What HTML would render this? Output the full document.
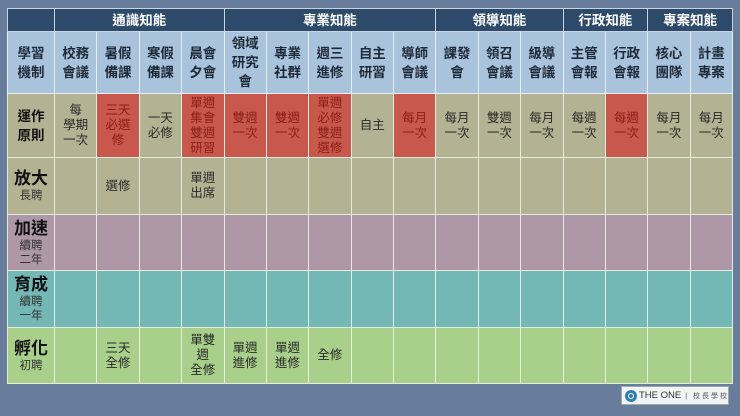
<!DOCTYPE html>
<html><head><meta charset="utf-8"><style>
body{margin:0;width:740px;height:416px;background:#687c9c;overflow:hidden;font-family:"Liberation Sans","Noto Sans CJK TC",sans-serif;position:relative}
table{position:absolute;left:7px;top:8px;width:726px;border-collapse:collapse;table-layout:fixed}
td{border:1px solid #e6ecdf;text-align:center;vertical-align:middle;padding:0;font-size:12.5px;line-height:15px;color:#2a2a2a;overflow:hidden}
.g td{background:#2e4a6a;color:#fff;font-size:13.5px;font-weight:bold;height:22px;border-color:#c8d4e0}
.h td{background:#a9c3dd;font-weight:bold;font-size:13.5px;line-height:19px;color:#1e2a38;height:61px;border-color:#e8eef5}
.o td{background:#b3b293;height:63px}
.o2 td{background:#b3b293;height:56px}
.p td{background:#ae98a8;height:55px}
.t td{background:#74b8b6;height:56px}
.n td{background:#a8d08b;height:55px}
td.r{background:#c8584b!important;color:#8c1e18}
.lb{font-weight:bold;font-size:17px;line-height:20px;color:#111}
.sb{font-size:11.5px;line-height:14px;color:#333;display:block}
.b{font-weight:bold;font-size:13.5px;line-height:19px;color:#111}
.logo{position:absolute;left:621px;top:386px;width:108px;height:19px;background:#f2f3f5;border:1px solid #9aa;box-sizing:border-box;display:flex;align-items:center;font-size:10px;color:#333;white-space:nowrap;overflow:hidden}
.logo .c{width:12px;height:12px;border-radius:50%;background:#2c7fb0;margin:0 2px 0 3px;position:relative;flex:none}
.logo .c:after{content:"";position:absolute;left:3px;top:3px;width:4px;height:4px;border:1px solid #fff;border-radius:50%}
</style></head><body>
<table>
<colgroup><col style="width:47px"><col span="16"></colgroup>
<tr class="g"><td></td><td colspan="4">通識知能</td><td colspan="5">專業知能</td><td colspan="3">領導知能</td><td colspan="2">行政知能</td><td colspan="2">專案知能</td></tr>
<tr class="h"><td>學習<br>機制</td><td>校務<br>會議</td><td>暑假<br>備課</td><td>寒假<br>備課</td><td>晨會<br>夕會</td><td>領域<br>研究<br>會</td><td>專業<br>社群</td><td>週三<br>進修</td><td>自主<br>研習</td><td>導師<br>會議</td><td>課發<br>會</td><td>領召<br>會議</td><td>級導<br>會議</td><td>主管<br>會報</td><td>行政<br>會報</td><td>核心<br>團隊</td><td>計畫<br>專案</td></tr>
<tr class="o"><td class="b">運作<br>原則</td><td>每<br>學期<br>一次</td><td class="r">三天<br>必選<br>修</td><td>一天<br>必修</td><td class="r">單週<br>集會<br>雙週<br>研習</td><td class="r">雙週<br>一次</td><td class="r">雙週<br>一次</td><td class="r">單週<br>必修<br>雙週<br>選修</td><td>自主</td><td class="r">每月<br>一次</td><td>每月<br>一次</td><td>雙週<br>一次</td><td>每月<br>一次</td><td>每週<br>一次</td><td class="r">每週<br>一次</td><td>每月<br>一次</td><td>每月<br>一次</td></tr>
<tr class="o2"><td><span class="lb">放大</span><span class="sb">長聘</span></td><td></td><td>選修</td><td></td><td>單週<br>出席</td><td></td><td></td><td></td><td></td><td></td><td></td><td></td><td></td><td></td><td></td><td></td><td></td></tr>
<tr class="p"><td><span class="lb">加速</span><span class="sb">續聘<br>二年</span></td><td></td><td></td><td></td><td></td><td></td><td></td><td></td><td></td><td></td><td></td><td></td><td></td><td></td><td></td><td></td><td></td></tr>
<tr class="t"><td><span class="lb">育成</span><span class="sb">續聘<br>一年</span></td><td></td><td></td><td></td><td></td><td></td><td></td><td></td><td></td><td></td><td></td><td></td><td></td><td></td><td></td><td></td><td></td></tr>
<tr class="n"><td><span class="lb">孵化</span><span class="sb">初聘</span></td><td></td><td>三天<br>全修</td><td></td><td>單雙<br>週<br>全修</td><td>單週<br>進修</td><td>單週<br>進修</td><td>全修</td><td></td><td></td><td></td><td></td><td></td><td></td><td></td><td></td><td></td></tr>
</table>
<div class="logo"><span class="c"></span><span style="font-size:9.5px">THE ONE</span><span style="font-size:7px;margin-left:4px;letter-spacing:2px;color:#555">| 校長學校</span></div>
</body></html>
